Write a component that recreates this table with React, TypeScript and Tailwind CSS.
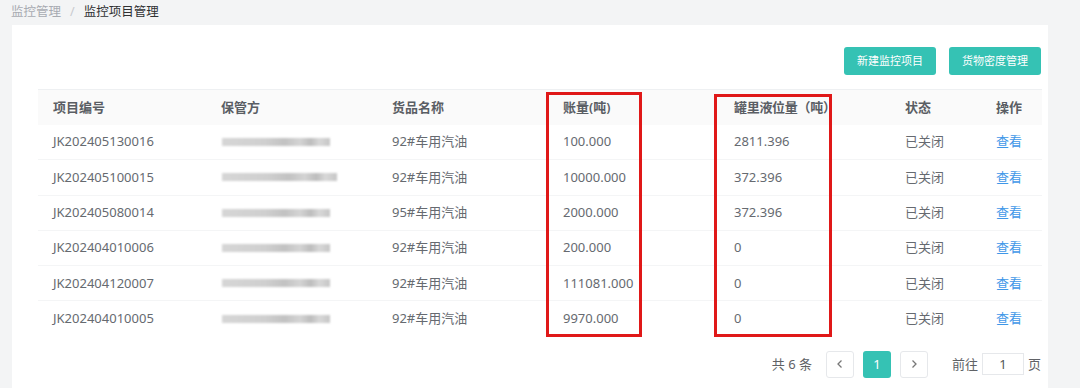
import React from 'react';

type Row = {
  code: string;
  goods: string;
  book: string;
  tank: string;
  status: string;
  barW: number;
};

const rows: Row[] = [
  { code: 'JK202405130016', goods: '92#车用汽油', book: '100.000', tank: '2811.396', status: '已关闭', barW: 108 },
  { code: 'JK202405100015', goods: '92#车用汽油', book: '10000.000', tank: '372.396', status: '已关闭', barW: 115 },
  { code: 'JK202405080014', goods: '95#车用汽油', book: '2000.000', tank: '372.396', status: '已关闭', barW: 108 },
  { code: 'JK202404010006', goods: '92#车用汽油', book: '200.000', tank: '0', status: '已关闭', barW: 108 },
  { code: 'JK202404120007', goods: '92#车用汽油', book: '111081.000', tank: '0', status: '已关闭', barW: 108 },
  { code: 'JK202404010005', goods: '92#车用汽油', book: '9970.000', tank: '0', status: '已关闭', barW: 108 },
];

const cols = 'grid grid-cols-[168px_171px_171px_171px_171px_91px_1fr]';

// blurred owner name (masked in the screenshot)
function MaskedName({ width }: { width: number }) {
  return (
    <div
      className="h-[8px] blur-[1px] bg-[linear-gradient(90deg,#d6d6d6,#cfcfcf_40%,#c2c2c2_58%,#d4d4d4_72%,#bdbdbd_82%,#d8d8d8_90%,#c6c6c6)]"
      style={{ width }}
    />
  );
}

function PageButton({ children, active }: { children: React.ReactNode; active?: boolean }) {
  return (
    <div
      className={
        active
          ? 'flex h-[27px] w-[28px] items-center justify-center rounded-[3px] bg-[#35c2b4] text-[13px] text-white'
          : 'flex h-[27px] w-[28px] items-center justify-center rounded-[3px] border border-[#e6e8eb] bg-white text-[#777]'
      }
    >
      {children}
    </div>
  );
}

export default function App() {
  return (
    <div
      className="min-h-[388px] w-[1080px] overflow-hidden bg-[#f3f4f5] text-[13px] text-[#666a70]"
      style={{ fontFamily: '"Noto Sans", "Noto Sans CJK SC", sans-serif' }}
    >
      {/* breadcrumb */}
      <div className="flex h-[25px] items-center pl-[11px] text-[12.5px]">
        <span className="text-[#a8abb2]">监控管理</span>
        <span className="mx-[9px] text-[#c8cacf]">/</span>
        <span className="text-[#303133]">监控项目管理</span>
      </div>

      <div className="ml-[12px] mr-[32px] h-[363px] bg-white pl-[26px] pr-[6px] pt-[22px]">
        <div className="flex justify-end gap-[13px] pr-[1px]">
          <button className="h-[28px] w-[92px] rounded-[3px] bg-[#35c2b4] text-[11px] text-white">新建监控项目</button>
          <button className="h-[28px] w-[92px] rounded-[3px] bg-[#35c2b4] text-[11px] text-white">货物密度管理</button>
        </div>

        <div className="relative mt-[14px]">
          {/* header */}
          <div className={`${cols} h-[36px] items-center border-t border-[#eef0f2] bg-[#fafafa] font-semibold text-[#5a5e64]`}>
            <div className="pl-[15px]">项目编号</div>
            <div className="pl-[15px]">保管方</div>
            <div className="pl-[15px]">货品名称</div>
            <div className="pl-[15px]">账量(吨)</div>
            <div className="pl-[15px] tracking-[-0.3px]">罐里液位量（吨）</div>
            <div className="pl-[15px]">状态</div>
            <div className="pl-[15px]">操作</div>
          </div>

          {rows.map((r, i) => (
            <div
              key={r.code}
              className={`${cols} h-[35.3px] items-center ${i < rows.length - 1 ? 'border-b border-[#f4f5f6]' : ''}`}
            >
              <div className="pl-[15px]">{r.code}</div>
              <div className="pl-[16px]">
                <MaskedName width={r.barW} />
              </div>
              <div className="pl-[15px]">{r.goods}</div>
              <div className="pl-[15px]">{r.book}</div>
              <div className="pl-[15px]">{r.tank}</div>
              <div className="pl-[15px]">{r.status}</div>
              <div className="pl-[15px] text-[#3f97e8]">查看</div>
            </div>
          ))}

          {/* red annotation boxes */}
          <div className="absolute left-[508px] top-[3px] h-[245px] w-[96px] border-[3px] border-[#e01818]" />
          <div className="absolute left-[676px] top-[5px] h-[243px] w-[118px] border-[3px] border-[#e01818]" />
        </div>

        {/* pagination */}
        <div className="mt-[14px] flex items-center justify-end pr-[1px] text-[13px] text-[#606266]">
          <span className="mr-[14px]">共 6 条</span>
          <PageButton>
            <svg width="10" height="10" viewBox="0 0 10 10" fill="none" stroke="currentColor" strokeWidth="1.3">
              <path d="M6.5 1.5 3 5l3.5 3.5" />
            </svg>
          </PageButton>
          <div className="w-[9px]" />
          <PageButton active>1</PageButton>
          <div className="w-[9px]" />
          <PageButton>
            <svg width="10" height="10" viewBox="0 0 10 10" fill="none" stroke="currentColor" strokeWidth="1.3">
              <path d="M3.5 1.5 7 5 3.5 8.5" />
            </svg>
          </PageButton>
          <span className="ml-[24px] mr-[4px]">前往</span>
          <div className="flex h-[22px] w-[42px] items-center justify-center border border-[#e6e8eb] text-[#555]">1</div>
          <span className="ml-[4px]">页</span>
        </div>
      </div>
    </div>
  );
}
